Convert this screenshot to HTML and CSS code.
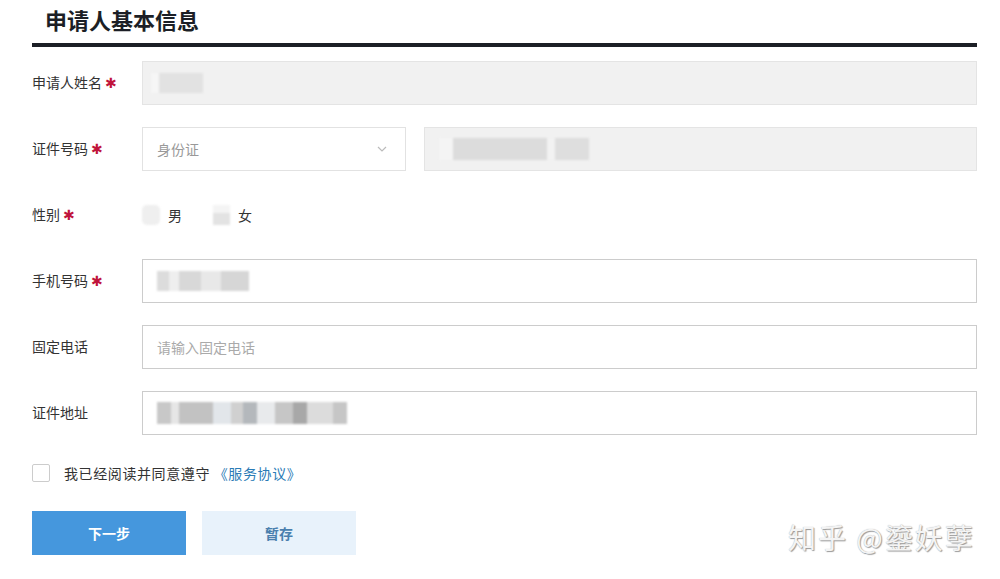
FILE: index.html
```html
<!DOCTYPE html>
<html lang="zh-CN">
<head>
  <meta charset="UTF-8" />
  <meta name="viewport" content="width=device-width, initial-scale=1.0" />
  <title>申请人基本信息</title>
  <link rel="stylesheet" href="styles.css">
</head>
<body>
  <div class="page">
    <h1 class="title">申请人基本信息</h1>

    <form class="form">
      <div class="row">
        <label class="label">申请人姓名<span class="req">✱</span></label>
        <div class="field field-disabled">
          <span class="mosaic mosaic-name"></span>
        </div>
      </div>

      <div class="row">
        <label class="label">证件号码<span class="req">✱</span></label>
        <div class="field field-select">
          <span class="select-text">身份证</span>
          <svg class="chevron" width="10" height="6" viewBox="0 0 10 6"><path d="M1 1l4 4 4-4" fill="none" stroke="#bbb" stroke-width="1.2"/></svg>
        </div>
        <div class="field field-disabled field-grow">
          <span class="mosaic mosaic-id"></span>
        </div>
      </div>

      <div class="row">
        <label class="label">性别<span class="req">✱</span></label>
        <div class="radios">
          <span class="radio"><span class="mosaic mosaic-radio"></span>男</span>
          <span class="radio"><span class="mosaic mosaic-radio2"></span>女</span>
        </div>
      </div>

      <div class="row">
        <label class="label">手机号码<span class="req">✱</span></label>
        <div class="field">
          <span class="mosaic mosaic-phone"></span>
        </div>
      </div>

      <div class="row">
        <label class="label">固定电话</label>
        <div class="field">
          <span class="placeholder">请输入固定电话</span>
        </div>
      </div>

      <div class="row">
        <label class="label">证件地址</label>
        <div class="field">
          <span class="mosaic mosaic-addr"></span>
        </div>
      </div>

      <div class="agree">
        <span class="checkbox"></span>
        <span>我已经阅读并同意遵守 <a class="link" href="#">《服务协议》</a></span>
      </div>

      <div class="actions">
        <button type="button" class="btn btn-primary">下一步</button>
        <button type="button" class="btn btn-light">暂存</button>
      </div>
    </form>
  </div>

  <div class="watermark">知乎 @鎏妖孽</div>
</body>
</html>
```

FILE: styles.css
```css
body {
  margin: 0;
  background: #fff;
  font-family: "Microsoft YaHei", "Noto Sans CJK SC", sans-serif;
  color: #333;
}
.page {
  width: 945px;
  margin-left: 32px;
}
.title {
  margin: 0;
  height: 43px;
  padding-left: 13px;
  font-size: 22px;
  line-height: 38px;
  font-weight: bold;
  color: #1c1f26;
  border-bottom: 4px solid #1c1f26;
}
.form {
  padding-top: 14px;
  display: flex;
  flex-direction: column;
  gap: 22px;
}
.row {
  display: flex;
  align-items: center;
  height: 44px;
}
.label {
  width: 110px;
  flex: none;
  display: flex;
  align-items: center;
  font-size: 14px;
  line-height: 20px;
  color: #333;
  margin-top: -2px;
}
.req {
  color: #c0143c;
  font-family: "DejaVu Sans", sans-serif;
  font-size: 14px;
  line-height: 1;
  margin-left: 3px;
  position: relative;
  top: 1px;
}
.field {
  flex: 1;
  height: 42px;
  border: 1px solid #ccc;
  display: flex;
  align-items: center;
  padding: 0 14px;
  font-size: 14px;
}
.field-disabled {
  background: #f1f1f1;
  border-color: #e4e4e4;
}
.field-select {
  flex: none;
  width: 234px;
  border-color: #e2e2e2;
  justify-content: space-between;
  margin-right: 18px;
}
.field-grow {
  flex: 1;
}
.select-text {
  color: #999;
}
.chevron {
  margin-right: 4px;
}
.placeholder {
  color: #aaa;
}
.radios {
  display: flex;
  gap: 31px;
  font-size: 14px;
  color: #333;
}
.radio {
  display: flex;
  align-items: center;
  gap: 8px;
}
.mosaic {
  display: block;
  filter: blur(1px);
}
.mosaic-name {
  width: 52px;
  height: 20px;
  margin-left: -6px;
  background: linear-gradient(90deg, #f6f6f6 0 8px, #e2e2e2 8px 52px);
}
.mosaic-id {
  width: 150px;
  height: 22px;
  background: linear-gradient(90deg, #f4f4f4 0 14px, #dcdcdc 14px 108px, #f2f2f2 108px 116px, #dedede 116px 150px);
}
.mosaic-radio {
  width: 18px;
  height: 20px;
  background: #efefef;
  border-radius: 5px;
}
.mosaic-radio2 {
  width: 17px;
  height: 20px;
  background: linear-gradient(#f4f4f4 0 8px, #e3e3e3 8px);
}
.mosaic-phone {
  width: 92px;
  height: 20px;
  background: linear-gradient(90deg, #dcdcdc 0 12px, #eee 12px 22px, #d8d8d8 22px 44px, #e8e8e8 44px 64px, #d6d6d6 64px 92px);
}
.mosaic-addr {
  width: 190px;
  height: 22px;
  background:
    linear-gradient(90deg, #c8c8c8 0 14px, #e6e6e6 14px 22px, #c2c2c2 22px 56px, #e2e6ea 56px 74px, #d0d0d0 74px 86px, #b4b8bc 86px 100px, #e8eaec 100px 118px, #c6c6c6 118px 136px, #a8a8a8 136px 150px, #dcdcdc 150px 176px, #c6c6c6 176px 190px);
}
.agree {
  display: flex;
  align-items: center;
  gap: 14px;
  font-size: 14px;
  letter-spacing: 0.6px;
  color: #333;
  margin-top: 6px;
}
.checkbox {
  width: 16px;
  height: 16px;
  border: 1px solid #ccc;
  border-radius: 2px;
  background: #fff;
}
.link {
  color: #2a7bb6;
  text-decoration: none;
}
.actions {
  display: flex;
  gap: 16px;
  margin-top: 6px;
}
.btn {
  width: 154px;
  height: 44px;
  border: none;
  font-family: inherit;
  font-size: 14px;
  font-weight: bold;
  cursor: pointer;
}
.btn-primary {
  background: #4597dd;
  color: #fff;
}
.btn-light {
  background: #e8f2fb;
  color: #4a7fae;
}
.watermark {
  position: absolute;
  left: 788px;
  top: 517px;
  font-size: 28px;
  color: #f4f4f4;
  text-shadow: 1px 1px 1px #999, 0 0 1px #aaa;
  font-family: "Noto Sans CJK SC", sans-serif;
  letter-spacing: 2px;
}
```
